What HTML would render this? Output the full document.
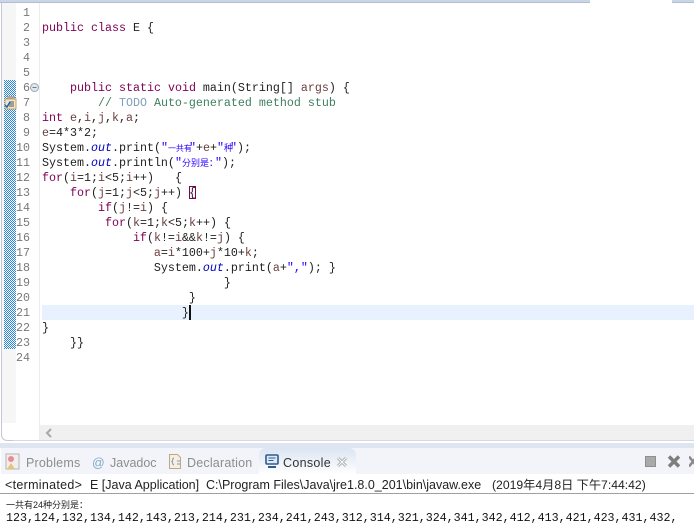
<!DOCTYPE html>
<html><head><meta charset="utf-8"><style>
html,body{margin:0;padding:0;background:#fff}
body{width:694px;height:532px;position:relative;overflow:hidden;font-family:"Liberation Sans","Noto Sans CJK SC",sans-serif}
div,svg{position:absolute}
.l{left:42px;height:15px;font:11.67px/15px "Liberation Mono","Noto Sans CJK SC",monospace;white-space:pre;color:#222;margin-top:1px}
.n{left:14px;width:16px;text-align:right;height:15px;font:11.67px/15px "Liberation Mono",monospace;color:#787878;margin-top:1px}
b{font-weight:normal;color:#7f0055}
i{color:#0000c0}
u{text-decoration:none;color:#6a3e3e}
s{text-decoration:none;color:#2a00ff}
.q{margin-left:-3px}
em{font-style:normal;color:#3f7f5f}
.z{font-size:8px;color:#2a00ff}
.y{font-size:9px;color:#2a00ff}
.t{font-size:12.5px;line-height:16px;top:455px;color:#8d8d8d;white-space:pre}
.h{top:477px;font-size:12.5px;line-height:16px;color:#222;white-space:pre}
</style></head><body>
<div style="left:0;top:0;width:590px;height:2px;background:#c9d6e8;border-bottom:1px solid #b4bdd2"></div>
<div style="left:672px;top:0;width:22px;height:2px;background:#c9d6e8;border-bottom:1px solid #b4bdd2"></div>
<div style="left:1px;top:3px;width:1px;height:430px;background:#c3c9d3"></div>
<div style="left:1px;top:433px;width:12px;height:7px;border-left:1px solid #c3c9d3;border-bottom:1px solid #c3c9d3;border-radius:0 0 0 6px"></div>
<div style="left:13px;top:440px;width:681px;height:1px;background:#d5d9e4"></div>
<div style="left:2px;top:3px;width:14px;height:420px;background:#f6f6f6"></div>
<svg style="left:4px;top:80px" width="12" height="269" shape-rendering="crispEdges"><defs><pattern id="c" width="2" height="2" patternUnits="userSpaceOnUse"><rect width="2" height="2" fill="#fff"/><rect width="1" height="1" fill="#2c84d8"/><rect x="1" y="1" width="1" height="1" fill="#2c84d8"/></pattern></defs><rect width="12" height="269" fill="url(#c)"/></svg>
<div style="left:39px;top:3px;width:1px;height:437px;background:#ececec"></div>
<div style="left:42px;top:305px;width:652px;height:15px;background:#e8f2fe"></div>

<div class="n" style="top:5px">1</div><div class="n" style="top:20px">2</div><div class="n" style="top:35px">3</div><div class="n" style="top:50px">4</div><div class="n" style="top:65px">5</div><div class="n" style="top:80px">6</div><div class="n" style="top:95px">7</div><div class="n" style="top:110px">8</div><div class="n" style="top:125px">9</div><div class="n" style="top:140px">10</div><div class="n" style="top:155px">11</div><div class="n" style="top:170px">12</div><div class="n" style="top:185px">13</div><div class="n" style="top:200px">14</div><div class="n" style="top:215px">15</div><div class="n" style="top:230px">16</div><div class="n" style="top:245px">17</div><div class="n" style="top:260px">18</div><div class="n" style="top:275px">19</div><div class="n" style="top:290px">20</div><div class="n" style="top:305px">21</div><div class="n" style="top:320px">22</div><div class="n" style="top:335px">23</div><div class="n" style="top:350px">24</div>

<svg style="left:30px;top:83px" width="10" height="10"><circle cx="4.5" cy="4.5" r="4" fill="#dfe6ec" stroke="#9aa8b4"/><path d="M2.500 4.500h4" stroke="#6b7c8a"/></svg>
<svg style="left:4px;top:95px" width="13" height="15"><rect x="3" y="1" width="8" height="3" fill="#a8a8a8"/><rect x="1" y="4" width="11" height="10" fill="#f4e6c4" stroke="#b8a16f"/><path d="M5 7h5M5 9h5M5 11h5" stroke="#555"/><path d="M1 10l2 2 3-5" stroke="#1d5fc4" stroke-width="1.500" fill="none"/></svg>

<div class="l" style="top:20px"><b>public</b> <b>class</b> E {</div>
<div class="l" style="top:80px">    <b>public</b> <b>static</b> <b>void</b> main(String[] <u>args</u>) {</div>
<div class="l" style="top:95px">        <em>// <span style="color:#7f9fbf">TODO</span> Auto-generated method stub</em></div>
<div class="l" style="top:110px"><b>int</b> <u>e</u>,<u>i</u>,<u>j</u>,<u>k</u>,<u>a</u>;</div>
<div class="l" style="top:125px"><u>e</u>=4*3*2;</div>
<div class="l" style="top:140px">System.<i>out</i>.print(<s>"<span class="z">一共有</span><span class="q">"</span></s>+<u>e</u>+<s>"<span class="y">种</span><span class="q">"</span></s>);</div>
<div class="l" style="top:155px">System.<i>out</i>.println(<s>"<span class="y">分别是：</span><span class="q">"</span></s>);</div>
<div class="l" style="top:170px"><b>for</b>(<u>i</u>=1;<u>i</u>&lt;5;<u>i</u>++)   {</div>
<div class="l" style="top:185px">    <b>for</b>(<u>j</u>=1;<u>j</u>&lt;5;<u>j</u>++) {</div>
<div style="left:189px;top:186px;width:5px;height:11px;border:1px solid #7f0055"></div>
<div class="l" style="top:200px">        <b>if</b>(<u>j</u>!=<u>i</u>) {</div>
<div class="l" style="top:215px">         <b>for</b>(<u>k</u>=1;<u>k</u>&lt;5;<u>k</u>++) {</div>
<div class="l" style="top:230px">             <b>if</b>(<u>k</u>!=<u>i</u>&amp;&amp;<u>k</u>!=<u>j</u>) {</div>
<div class="l" style="top:245px">                <u>a</u>=<u>i</u>*100+<u>j</u>*10+<u>k</u>;</div>
<div class="l" style="top:260px">                System.<i>out</i>.print(<u>a</u>+<s>","</s>); }</div>
<div class="l" style="top:275px">                          }</div>
<div class="l" style="top:290px">                     }</div>
<div class="l" style="top:305px">                    }</div>
<div style="left:189px;top:305px;width:2px;height:15px;background:#111"></div>
<div class="l" style="top:320px">}</div>
<div class="l" style="top:335px">    }}</div>

<div style="left:40px;top:425px;width:654px;height:15px;background:#f0f0f0"></div>
<svg style="left:44px;top:427px" width="10" height="12"><path d="M7 2L3 6l4 4" fill="none" stroke="#a8a8a8" stroke-width="2"/></svg>
<div style="left:0;top:443px;width:694px;height:5px;background:#dfe4f1"></div>
<div style="left:1px;top:448px;width:693px;height:26px;background:#f3f4f9"></div>
<div style="left:259px;top:448px;width:97px;height:26px;border-radius:7px 7px 0 0;background:linear-gradient(#dbe5f2,#f5f7fb 75%,#fff)"></div>

<svg style="left:5px;top:453px" width="16" height="18"><rect x="1" y="1" width="13" height="15" fill="#f2eeee" stroke="#b5b5b5"/><circle cx="6" cy="6" r="3" fill="#ea8b95"/><path d="M2 16l4-6 4 6z" fill="#e5c676"/></svg>
<div class="t" style="left:26px;letter-spacing:.2px">Problems</div>
<div class="t" style="left:92px;color:#7fa9c8">@</div>
<div class="t" style="left:110px">Javadoc</div>
<svg style="left:168px;top:453px" width="15" height="17"><path d="M1.500 1.500h8l3 3v11h-11z" fill="#f6efe2" stroke="#c0a880"/><path d="M6 5c-2 0-1 3-2 3.500 1 .5 0 3.500 2 3.500" fill="none" stroke="#7d9ab8"/><path d="M9 8h3M9 11h3" stroke="#7d9ab8"/></svg>
<div class="t" style="left:187px;letter-spacing:.2px">Declaration</div>
<svg style="left:265px;top:454px" width="14" height="15"><rect x="1" y="1" width="12" height="9" rx="1" fill="#dfe8f3" stroke="#2b5d8f" stroke-width="1.600"/><path d="M3.500 4h7M3.500 6.500h5" stroke="#2b5d8f"/><path d="M3 13h8" stroke="#2b5d8f" stroke-width="2"/></svg>
<div class="t" style="left:283px;color:#333;letter-spacing:.3px">Console</div>
<svg style="left:336px;top:456px" width="12" height="12"><path d="M2 2l8 8M10 2l-8 8" stroke="#aaa" stroke-width="3"/><path d="M2 2l8 8M10 2l-8 8" stroke="#fff" stroke-width="1"/></svg>
<div style="left:645px;top:456px;width:9px;height:9px;background:#a9a9a9;border:1px solid #8f8f8f"></div>
<svg style="left:667px;top:455px" width="14" height="13"><path d="M2 1.500l10 10M12 1.500l-10 10" stroke="#7e7e7e" stroke-width="3.500"/></svg>
<svg style="left:689px;top:455px" width="5" height="13"><path d="M0 1.500l8 10M8 1.500l-8 10" stroke="#8a8a8a" stroke-width="2.500"/></svg>

<div class="h" style="left:5px;letter-spacing:.3px">&lt;terminated&gt;</div>
<div class="h" style="left:90px">E [Java Application]</div>
<div class="h" style="left:206px">C:\Program Files\Java\jre1.8.0_201\bin\javaw.exe</div>
<div class="h" style="left:492px;font-size:12.2px">(2019年4月8日 下午7:44:42)</div>
<div style="left:0;top:493px;width:694px;height:1px;background:#a0a0a0"></div>
<div style="left:6px;top:499px;font-size:9px;line-height:12px;color:#222;white-space:pre">一共有24种分别是：</div>
<div class="l" style="left:6px;top:510px;color:#111">123,124,132,134,142,143,213,214,231,234,241,243,312,314,321,324,341,342,412,413,421,423,431,432,</div>
</body></html>
